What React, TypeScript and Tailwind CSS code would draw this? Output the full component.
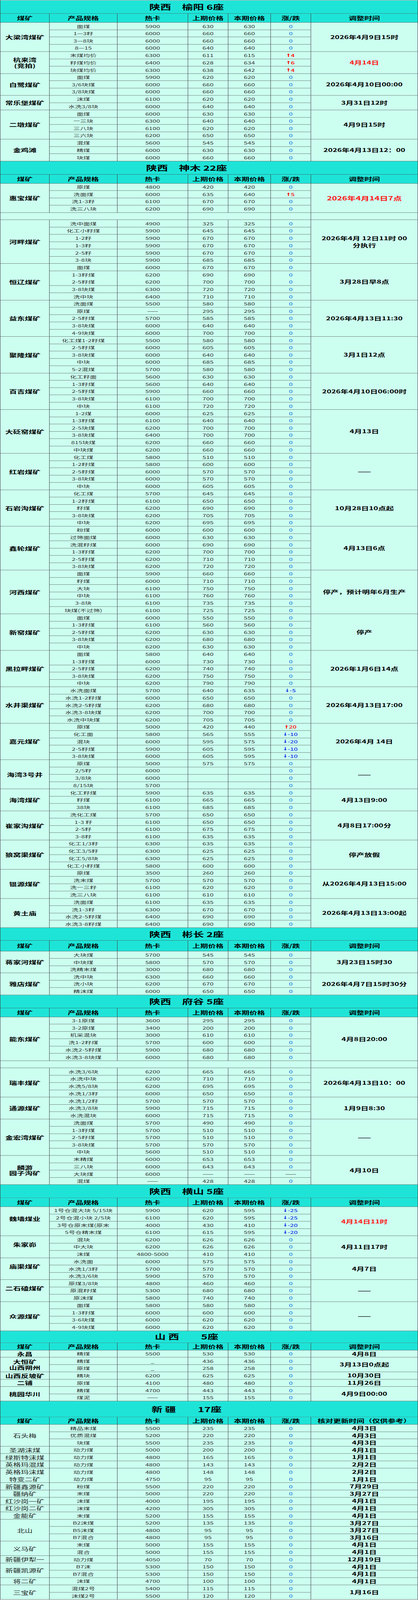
// 煤矿价格表：七个产区，每个产区一个标题条、表头和数据表
// 浏览器窗口实际高 4096px，整表按 4096/6469 纵向压缩后放入窗口
type Row = { s: string; h: string; p: string; c: string; d: number | null; t?: string; nb?: boolean };
type Group = {
  m: string;
  t?: string;
  red?: boolean;
  big?: boolean;
  up?: boolean;
  nb?: boolean;
  blank?: boolean;
  rows: Row[];
};
type Section = { title: string; th: string; hh: string; last: string; thin?: boolean; groups: Group[] };

const r = (s: string, h: string, p: string, c: string, d: number | null = 0, o: Partial<Row> = {}): Row => ({
  s,
  h,
  p,
  c,
  d,
  ...o,
});
const same = (s: string, h: string, p: string, o: Partial<Row> = {}) => r(s, h, p, p, 0, o);
const BLANK: Group = { m: "", blank: true, rows: [] };

const SECTIONS: Section[] = [
  {
    title: "陕西　榆阳 6座",
    th: "h-[53px]",
    hh: "h-[36px]",
    last: "调整时间",
    groups: [
      {
        m: "大梁湾煤矿",
        t: "2026年4月9日15时",
        rows: [same("面煤", "5900", "630"), same("1—3籽", "6000", "660"), same("3—8块", "6000", "660"), same("8—15", "6000", "640")],
      },
      {
        m: "杭来湾\n(竞拍)",
        t: "4月14日",
        red: true,
        rows: [r("末煤均价", "6300", "611", "615", 4), r("籽煤均价", "6400", "628", "634", 6), r("块煤均价", "6300", "638", "642", 4)],
      },
      {
        m: "白鹭煤矿",
        t: "2026年4月10日00:00",
        rows: [same("面煤", "5900", "620"), same("3/6块煤", "6000", "660"), same("3/8块煤", "6000", "660")],
      },
      { m: "常乐堡煤矿", t: "3月31日12时", rows: [same("沫煤", "6100", "620"), same("水洗3/8块", "6000", "640")] },
      {
        m: "二墩煤矿",
        t: "4月9日15时",
        rows: [same("面煤", "6000", "630"), same("一三块", "6300", "640"), same("三八块", "6100", "620"), same("三六块", "6200", "650")],
      },
      {
        m: "金鸡滩",
        t: "2026年4月13日12：00",
        rows: [same("混煤", "5600", "545"), same("精煤", "6000", "630"), same("块煤", "6000", "660")],
      },
    ],
  },
  {
    title: "陕西　神木 22座",
    th: "h-[54px]",
    hh: "h-[36px]",
    last: "调整时间",
    groups: [
      {
        m: "惠宝煤矿",
        t: "2026年4月14日7点",
        red: true,
        big: true,
        rows: [same("原煤", "4800", "420"), r("洗面煤", "6000", "635", "640", 5), same("洗1-3籽", "6100", "670"), same("洗三八块", "6200", "690")],
      },
      BLANK,
      {
        m: "河畔煤矿",
        t: "2026年4月 12日11时 00\n分执行",
        rows: [
          same("洗中面煤", "4900", "325"),
          same("化工小籽煤", "5900", "645"),
          same("1-2籽", "5900", "670"),
          same("1-3籽", "5900", "670"),
          same("2-5籽", "5900", "670"),
          same("3-8块", "5900", "685"),
        ],
      },
      {
        m: "恒辽煤矿",
        t: "3月28日早8点",
        rows: [
          same("面煤", "6000", "670"),
          same("1-3籽煤", "6200", "690", { nb: true }),
          same("2-5籽煤", "6200", "700"),
          same("3-8块煤", "6300", "720"),
          same("洗中块", "6400", "710"),
        ],
      },
      {
        m: "益东煤矿",
        t: "2026年4月13日11:30",
        rows: [
          same("洗面煤", "5500", "580"),
          same("原煤", "——", "295"),
          same("2-5籽煤", "5700", "585"),
          same("3-8块煤", "6000", "640"),
          same("4-9块煤", "6000", "700"),
        ],
      },
      {
        m: "聚隆煤矿",
        t: "3月1日12点",
        rows: [
          same("化工煤1-2籽煤", "5500", "580"),
          same("2-5籽煤", "6000", "605"),
          same("3-8块煤", "6000", "640"),
          same("中块", "6000", "685"),
          same("5-2混煤", "5700", "580"),
        ],
      },
      {
        m: "百吉煤矿",
        t: "2026年4月10日06:00时",
        rows: [
          same("化工籽面", "5600", "630"),
          same("1-3籽煤", "5600", "640"),
          same("2-5籽煤", "5900", "660"),
          same("3-8块煤", "6100", "700"),
          same("中块", "6100", "720"),
        ],
      },
      {
        m: "大砭窑煤矿",
        t: "4月13日",
        rows: [
          same("1-2煤", "6000", "625"),
          same("1-3籽煤", "6100", "640"),
          same("2-5块煤", "6200", "700"),
          same("3-8块煤", "6400", "700"),
          same("815块煤", "6200", "660"),
          same("中块煤", "6200", "660"),
        ],
      },
      {
        m: "红岩煤矿",
        t: "——",
        rows: [
          same("化工煤", "5800", "510"),
          same("1-2籽煤", "5800", "600"),
          same("2-5籽煤", "6000", "570"),
          same("3-8块煤", "6000", "570"),
          same("中块", "6000", "605"),
        ],
      },
      {
        m: "石岩沟煤矿",
        t: "10月28日10点起",
        rows: [
          same("化工煤", "5700", "645"),
          same("1-2籽煤", "6100", "650"),
          same("籽煤", "6200", "690"),
          same("3-8块煤", "6200", "705"),
          same("中块", "6200", "695"),
        ],
      },
      {
        m: "鑫轮煤矿",
        t: "4月13日6点",
        rows: [
          same("粉煤", "6000", "600"),
          same("过筛面煤", "6000", "630"),
          same("洗混籽煤", "6000", "690"),
          same("1-3籽煤", "6200", "700"),
          same("2-5籽煤", "6200", "710"),
          same("3-8块煤", "6200", "720"),
        ],
      },
      {
        m: "河西煤矿",
        t: "停产，预计明年6月生产",
        rows: [
          same("面煤", "5900", "660"),
          same("籽煤", "6000", "710"),
          same("大块", "6100", "750"),
          same("中块", "6100", "760"),
          same("3-8块", "6100", "735"),
          same("块煤(不过筛)", "6100", "725"),
        ],
      },
      {
        m: "新窑煤矿",
        t: "停产",
        rows: [
          same("面煤", "6000", "550"),
          same("1-3籽煤", "6100", "560"),
          same("2-5籽煤", "6200", "630"),
          same("3-8块煤", "6200", "680"),
          same("中块", "6200", "630"),
        ],
      },
      {
        m: "黑拉畔煤矿",
        t: "2026年1月6日14点",
        rows: [
          same("面煤", "5800", "640", { nb: true }),
          same("1-3籽煤", "6000", "730"),
          same("2-5籽煤", "6200", "740"),
          same("3-8块煤", "6200", "750"),
          same("中块", "6200", "790"),
        ],
      },
      {
        m: "水井渠煤矿",
        t: "2026年4月13日17:00",
        rows: [
          r("水洗面煤", "5700", "640", "635", -5),
          same("水洗1-2籽煤", "6000", "650"),
          same("水洗2-5籽煤", "6200", "680"),
          same("水洗3-8块煤", "6200", "700"),
          same("水洗中块煤", "6200", "705"),
        ],
      },
      {
        m: "嘉元煤矿",
        t: "2026年4月 14日",
        rows: [
          r("原煤", "5000", "420", "440", 20),
          r("化工面", "5800", "565", "555", -10),
          r("混块", "6000", "595", "575", -20),
          r("2-5籽煤", "5900", "605", "595", -10),
          r("3-8块煤", "6000", "605", "595", -10),
        ],
      },
      {
        m: "海湾3号井",
        t: "——",
        rows: [same("原煤", "5000", "575"), same("2/5籽", "6000", ""), same("3/8块", "6000", ""), same("8/15块", "5700", "")],
      },
      {
        m: "海湾煤矿",
        t: "4月13日9:00",
        rows: [same("化工籽煤", "5900", "635"), same("籽煤", "6100", "665"), same("38块", "6100", "685")],
      },
      {
        m: "崔家沟煤矿",
        t: "4月8日17:00分",
        rows: [same("洗化工煤", "5700", "650"), same("1-3 籽", "6100", "650"), same("2-5籽", "6100", "675"), same("3-8籽", "6100", "635")],
      },
      {
        m: "狼窝渠煤矿",
        t: "停产放假",
        rows: [
          same("化工1/3籽", "6300", "635"),
          same("化工3/5籽", "6300", "625"),
          same("化工5/8块", "6300", "625"),
          same("化工小籽煤", "5800", "600"),
        ],
      },
      {
        m: "锟源煤矿",
        t: "从2026年4月13日15:00",
        rows: [same("原煤", "3500", "260"), same("洗末煤", "5700", "570"), same("洗一三籽", "6100", "620"), same("洗三八块", "6100", "610")],
      },
      {
        m: "黄土庙",
        t: "2026年4月13日13:00起",
        rows: [
          same("洗面煤", "6100", "635"),
          same("洗1-3籽", "6300", "670"),
          same("水洗2-5籽煤", "6400", "690"),
          same("水洗3-8籽煤", "6400", "690"),
        ],
      },
    ],
  },
  {
    title: "陕西　彬长 2座",
    th: "h-[52px]",
    hh: "h-[43px]",
    last: "调整时间",
    groups: [
      {
        m: "蒋家河煤矿",
        t: "3月23日15时30",
        rows: [same("大块煤", "5700", "545"), same("中块煤", "5800", "570"), same("洗精末煤", "3000", "680")],
      },
      {
        m: "雅店煤矿",
        t: "2026年4月7日15时30分",
        rows: [same("洗中块", "6300", "660"), same("洗小块", "6200", "670"), same("精沫煤", "6000", "650")],
      },
    ],
  },
  {
    title: "陕西　府谷 5座",
    th: "h-[53px]",
    hh: "h-[36px]",
    last: "调整时间",
    groups: [
      {
        m: "能东煤矿",
        t: "4月8日20:00",
        rows: [
          same("3-1原煤", "3600", "295"),
          same("3-2原煤", "3400", "200"),
          same("机采混块", "3000", "610"),
          same("洗1-2籽煤", "5700", "600"),
          same("水洗2-5籽煤", "5900", "680"),
          same("水洗3-8块煤", "6000", "680"),
        ],
      },
      BLANK,
      {
        m: "瑞丰煤矿",
        t: "2026年4月13日10：00",
        rows: [
          same("水洗3/6块", "6200", "665"),
          same("水洗中块", "6200", "710"),
          same("水洗5/8块", "6200", "695"),
          same("水洗1/3籽", "6000", "650"),
        ],
      },
      {
        m: "通源煤矿",
        t: "1月9日8:30",
        rows: [same("水洗1/2籽", "5700", "570"), same("水洗3/8块", "5900", "715"), same("水洗混块", "6000", "715")],
      },
      {
        m: "金宏湾煤矿",
        t: "——",
        rows: [
          same("洗面煤", "5700", "490"),
          same("1-3籽煤", "5700", "510"),
          same("2-5籽煤", "5700", "510"),
          same("3-8块煤", "5700", "570"),
          same("中块", "5600", "510"),
        ],
      },
      {
        m: "麟游\n园子沟矿",
        t: "4月10日",
        rows: [
          same("末精煤", "6000", "653"),
          same("三八块", "6000", "643"),
          r("大块煤", "6000", "——", "——", null),
          same("混煤", "——", "428"),
        ],
      },
    ],
  },
  {
    title: "陕西　横山 5座",
    th: "h-[53px]",
    hh: "h-[36px]",
    last: "调整时间",
    groups: [
      {
        m: "魏墙煤业",
        t: "4月14日11时",
        red: true,
        up: true,
        rows: [
          r("1号仓混大块 5/15块", "5900", "620", "595", -25),
          r("2号仓混小块 2/5块", "6100", "620", "595", -25),
          r("3号仓原末煤(原末", "4000", "430", "410", -20),
          r("5号仓精末煤", "6100", "615", "595", -20),
        ],
      },
      {
        m: "朱家峁",
        t: "4月11日17时",
        up: true,
        rows: [same("混块", "6200", "626"), same("中大块", "6200", "626"), same("沫煤", "4800-5000", "410")],
      },
      {
        m: "庙渠煤矿",
        t: "4月7日",
        up: true,
        rows: [same("水洗面", "6000", "575"), same("水洗1/3籽", "5700", "570"), same("水洗3/6块", "5900", "570")],
      },
      {
        m: "二石磕煤矿",
        t: "——",
        up: true,
        rows: [same("原煤3/8块", "4800", "460"), same("原混籽煤", "5300", "680"), same("原沫煤", "5800", "740")],
      },
      {
        m: "众源煤矿",
        t: "——",
        rows: [same("面煤", "5800", "580"), same("1-3籽煤", "6000", "600"), same("3-6块煤", "6000", "620"), same("4-9块煤", "6000", "620")],
      },
    ],
  },
  {
    title: "山 西　　5座",
    th: "h-[48px]",
    hh: "h-[30px]",
    last: "调整时间",
    groups: [
      { m: "永昌", t: "4月8日", rows: [same("精煤", "5500", "530")] },
      { m: "大恒矿\n山西朔州", t: "3月13日0点起", rows: [same("精煤", "_", "436"), same("原煤", "_", "258")] },
      { m: "山西反坡矿", t: "10月30日", rows: [same("精块", "6200", "625")] },
      { m: "二铺", t: "11月26日", rows: [same("原煤", "4100", "480")] },
      { m: "桃园华川", t: "4月9日00:00", rows: [same("精煤", "4700", "443"), same("煤泥", "——", "155")] },
    ],
  },
  {
    title: "新 疆　　17座",
    th: "h-[64px]",
    hh: "h-[30px]",
    last: "核对更新时间（仅供参考）",
    thin: true,
    groups: [
      {
        m: "石头梅",
        rows: [
          same("精品末煤", "5500", "235", { t: "4月3日" }),
          same("优质混煤", "5200", "220", { t: "4月3日" }),
          same("块煤", "5500", "235", { t: "4月3日" }),
        ],
      },
      { m: "圣湖沫煤", rows: [same("动力煤", "5000", "200", { t: "4月1日" })] },
      { m: "绿斯特沫煤", rows: [same("动力煤", "4800", "165", { t: "1月1日" })] },
      { m: "英格玛混煤", rows: [same("动力煤", "4800", "143", { t: "2月2日" })] },
      { m: "英格玛沫煤", nb: true, rows: [same("动力煤", "4800", "148", { t: "2月2日", nb: true })] },
      { m: "特变二矿", rows: [same("动力煤", "4750", "95", { t: "1月1日" })] },
      { m: "新疆鑫源矿", rows: [same("粉煤", "5500", "220", { t: "7月29日" })] },
      { m: "疆纳矿", rows: [same("末煤", "5000", "220", { t: "3月27日" })] },
      { m: "红沙岗一矿", rows: [same("沫煤", "4000", "195", { t: "4月1日" })] },
      { m: "红沙岗二矿", rows: [same("沫煤", "4200", "305", { t: "4月1日" })] },
      { m: "金能矿", rows: [same("末煤", "5200", "155", { t: "4月1日" })] },
      {
        m: "北山",
        rows: [
          same("B2沫煤", "5200", "135", { t: "3月27日" }),
          same("B5沫煤", "4800", "95", { t: "3月27日" }),
          same("B7混合", "4800", "95", { t: "3月16日" }),
        ],
      },
      { m: "义马矿", rows: [same("末煤", "5000", "155", { t: "4月1日" }), same("混合", "5000", "155", { t: "4月1日" })] },
      { m: "新疆伊犁一", rows: [same("动力煤", "4050", "70", { t: "12月19日" })] },
      { m: "新疆凯源矿", rows: [same("B7沫", "5300", "150", { t: "4月1日" }), same("B7混合", "5300", "150", { t: "4月1日" })] },
      { m: "将二矿", rows: [same("沫煤", "4700", "100", { t: "4月1日" })] },
      { m: "三宝矿", t: "1月16日", rows: [same("混煤2号", "5400", "115"), same("沫煤2号", "5500", "120")] },
    ],
  },
];

const GRID = "grid grid-cols-[126px_174px_181px_103px_109px_103px_274px]";
const LINE = "border-r border-[#3c3c3c]";
const CELL = "flex items-center justify-center overflow-hidden text-center border-r border-[#3c3c3c]";
const SPAN: Record<number, string> = {
  1: "row-span-1",
  2: "row-span-2",
  3: "row-span-3",
  4: "row-span-4",
  5: "row-span-5",
  6: "row-span-6",
};
const HEAD = ["煤矿", "产品规格", "热卡", "上期价格", "本期价格", "涨/跌"];

function Arrow({ up }: { up: boolean }) {
  return (
    <svg width="8" height="15" viewBox="0 0 8 15" className="mr-[2px]" fill="currentColor">
      {up ? <path d="M4 0.5 L7.6 6 H5.1 V14.5 H2.9 V6 H0.4 Z" /> : <path d="M4 14.5 L7.6 9 H5.1 V0.5 H2.9 V9 H0.4 Z" />}
    </svg>
  );
}

function Change({ d }: { d: number | null }) {
  if (d === null) return <span className="text-[#333]">——</span>;
  if (d === 0) return <span className="font-medium text-[#2d86dc]">0</span>;
  const up = d > 0;
  return (
    <span className={`flex items-center font-medium ${up ? "text-[#ff0000]" : "text-[#1232e8]"}`}>
      <Arrow up={up} />
      {d}
    </span>
  );
}

function groupCells(g: Group, gi: number, thin?: boolean) {
  if (g.blank) {
    return [
      <div key={`${gi}a`} className={`col-span-3 border-b ${LINE}`} />,
      <div key={`${gi}b`} className={`col-span-2 border-b ${LINE}`} />,
      <div key={`${gi}c`} className={`border-b ${LINE}`} />,
      <div key={`${gi}d`} className={`border-b ${LINE}`} />,
    ];
  }
  const n = g.rows.length;
  const out: React.ReactNode[] = [];
  g.rows.forEach((row, i) => {
    const b = row.nb ? "" : "border-b";
    if (i === 0) {
      out.push(
        <div
          key={`${gi}m`}
          className={`${CELL} ${SPAN[n]} ${g.nb ? "" : "border-b"} ${g.up ? "pb-5" : ""} whitespace-pre-line leading-[23px] ${
            thin ? "text-[20px] font-normal text-[#222]" : "text-[20px] font-bold text-black"
          }`}
        >
          {g.m}
        </div>,
      );
    }
    const data = "text-[17px] text-[#333]";
    out.push(
      <div key={`${gi}-${i}s`} className={`${CELL} ${b} ${data} whitespace-nowrap ${row.s.length > 9 ? "text-[16px]" : ""}`}>
        {row.s}
      </div>,
      <div key={`${gi}-${i}h`} className={`${CELL} ${b} ${data}`}>
        {row.h}
      </div>,
      <div key={`${gi}-${i}p`} className={`${CELL} ${b} ${data}`}>
        {row.p}
      </div>,
      <div key={`${gi}-${i}c`} className={`${CELL} ${b} ${data}`}>
        {row.c}
      </div>,
      <div key={`${gi}-${i}d`} className={`${CELL} ${b} text-[17px]`}>
        <Change d={row.d} />
      </div>,
    );
    if (g.t !== undefined) {
      if (i === 0) {
        out.push(
          <div
            key={`${gi}t`}
            className={`${CELL} ${SPAN[n]} border-b whitespace-pre-line leading-[28px] font-bold ${g.big ? "text-[22px]" : "text-[20px]"} ${
              g.red ? "text-[#ff1414]" : "text-black"
            }`}
          >
            {g.t}
          </div>,
        );
      }
    } else {
      out.push(
        <div key={`${gi}-${i}t`} className={`${CELL} ${b} text-[20px] font-bold text-black`}>
          {row.t}
        </div>,
      );
    }
  });
  return out;
}

function Table({ sec }: { sec: Section }) {
  return (
    <>
      <div
        className={`${sec.th} flex items-center justify-center whitespace-pre border-b border-r border-[#3c3c3c] bg-[#1ee4d8] pr-[115px] text-[28px] font-bold text-black`}
      >
        {sec.title}
      </div>
      <div className={`${GRID} ${sec.hh} bg-[#1ee4d8] text-[20px] font-bold text-black`}>
        {[...HEAD, sec.last].map((h) => (
          <div key={h} className={`${CELL} border-b whitespace-nowrap`}>
            {h}
          </div>
        ))}
      </div>
      <div className={`${GRID} auto-rows-[29.5px] bg-[#ccfff0]`}>{sec.groups.flatMap((g, gi) => groupCells(g, gi, sec.thin))}</div>
    </>
  );
}

export default function App() {
  return (
    <div className="h-[4096px] w-[1071px] overflow-hidden bg-white font-['Noto_Sans_CJK_SC','Noto_Sans',sans-serif]">
      <div className="w-[1071px] origin-top scale-y-[0.6332]">
        <div className="h-px bg-white" />
        <div className="border-l border-t border-[#3c3c3c]">
          {SECTIONS.map((sec) => (
            <Table key={sec.title} sec={sec} />
          ))}
        </div>
      </div>
    </div>
  );
}
